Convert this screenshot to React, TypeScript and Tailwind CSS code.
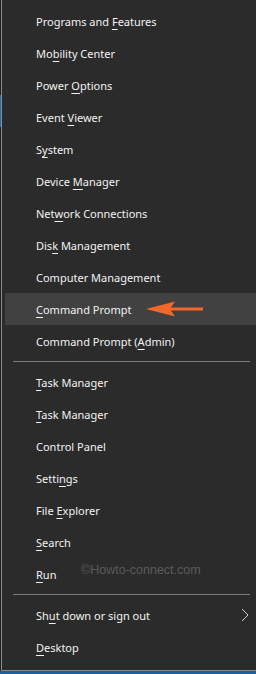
import React from "react";

type Item = { pre: string; key?: string; post?: string; active?: boolean; more?: boolean };

const GROUPS: Item[][] = [
  [
    { pre: "Programs and ", key: "F", post: "eatures" },
    { pre: "Mo", key: "b", post: "ility Center" },
    { pre: "Power ", key: "O", post: "ptions" },
    { pre: "Event ", key: "V", post: "iewer" },
    { pre: "S", key: "y", post: "stem" },
    { pre: "Device ", key: "M", post: "anager" },
    { pre: "Net", key: "w", post: "ork Connections" },
    { pre: "Dis", key: "k", post: " Management" },
    { pre: "Computer Management" },
    { pre: "", key: "C", post: "ommand Prompt", active: true },
    { pre: "Command Prompt (", key: "A", post: "dmin)" },
  ],
  [
    { pre: "", key: "T", post: "ask Manager" },
    { pre: "", key: "T", post: "ask Manager" },
    { pre: "Control Panel" },
    { pre: "Setti", key: "n", post: "gs" },
    { pre: "File ", key: "E", post: "xplorer" },
    { pre: "", key: "S", post: "earch" },
    { pre: "", key: "R", post: "un" },
  ],
  [
    { pre: "Sh", key: "u", post: "t down or sign out", more: true },
    { pre: "", key: "D", post: "esktop" },
  ],
];

function Arrow() {
  return (
    <svg width="60" height="18" viewBox="0 0 60 18" className="ml-[14px]">
      <path d="M1 9 L30 1.5 L25 9 L30 16.5 Z" fill="#f2682a" />
      <rect x="24" y="7.5" width="34" height="3" fill="#f2682a" />
    </svg>
  );
}

function Row({ item }: { item: Item }) {
  return (
    <div
      className={`flex h-8 items-center pl-[31px] pr-[6px] ${item.active ? "bg-[#414141]" : ""}`}
    >
      <span className="mt-[2px] whitespace-nowrap">
        {item.pre}
        {item.key && <span className="underline decoration-1 underline-offset-[3px]">{item.key}</span>}
        {item.post}
      </span>
      {item.active && <Arrow />}
      {item.more && (
        <svg width="10" height="14" viewBox="0 0 10 14" className="ml-auto">
          <path d="M2 1 L8 7 L2 13" fill="none" stroke="#c9d2dc" strokeWidth="1" />
        </svg>
      )}
    </div>
  );
}

export default function App() {
  return (
    <div className="flex h-[674px] w-[256px] flex-col bg-[#1c1c1c]">
      <div className="flex flex-1">
        {/* desktop edge */}
        <div className="flex w-px flex-col bg-[#202020]">
          <div className="mt-[95px] h-[32px] bg-[#1e6fb8]" />
        </div>
        <div
          className="flex flex-1 flex-col border-b border-l border-[#8a8a8a] bg-[#2b2b2b] pt-[5px] pl-[3px] text-[11px] text-[#f2f2f2]"
          style={{ fontFamily: '"Noto Sans", "Open Sans", sans-serif' }}
        >
          {GROUPS.map((g, gi) => (
            <div key={gi}>
              {gi > 0 && (
                <div className="flex h-[9px] items-center pl-[8px] pr-[6px]">
                  <div className="h-px w-full bg-[#7a7a7a]" />
                </div>
              )}
              {g.map((it, i) => (
                <Row key={i} item={it} />
              ))}
              {gi === 1 && (
                <div className="pointer-events-none relative">
                  <span
                    className="absolute left-[76px] top-[-29px] text-[12.5px] text-[#5a5a5a]"
                    style={{ fontFamily: '"Liberation Sans", sans-serif' }}
                  >
                    ©Howto-connect.com
                  </span>
                </div>
              )}
            </div>
          ))}
        </div>
      </div>
      <div className="h-[3px] bg-[#1d5f9a]" />
    </div>
  );
}
